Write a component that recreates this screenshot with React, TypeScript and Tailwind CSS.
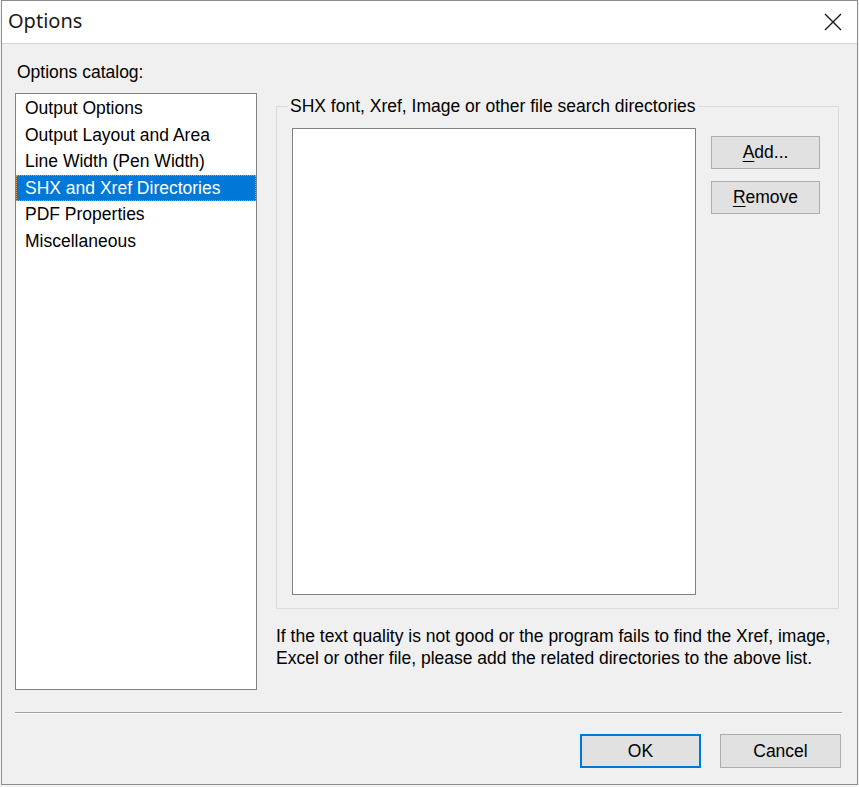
const catalog = [
  'Output Options',
  'Output Layout and Area',
  'Line Width (Pen Width)',
  'SHX and Xref Directories',
  'PDF Properties',
  'Miscellaneous',
];

function WinButton({ children, primary, className }: { children: React.ReactNode; primary?: boolean; className?: string }) {
  return (
    <button
      className={`flex items-center justify-center bg-[#e1e1e1] text-black ${
        primary ? 'border-2 border-[#0078d7]' : 'border border-[#adadad]'
      } ${className ?? ''}`}
    >
      {children}
    </button>
  );
}

export default function App() {
  return (
    <div className="w-[859px] h-[787px] bg-[#f4f4f4] overflow-hidden font-['Liberation_Sans',Arial,sans-serif] text-[17.5px] text-black">
      <div className="ml-[1px] w-[857px] h-[785px] border border-[#8c8c8c] bg-[#f0f0f0] flex flex-col">
        {/* title bar */}
        <div className="h-[43px] bg-white border-b border-[#d4d4d4] flex items-center justify-between shrink-0">
          <span className="ml-[6px] mb-[2px] font-['Noto_Sans','Open_Sans',sans-serif] text-[20px] text-[#1a1a1a]">Options</span>
          <svg width="18" height="18" viewBox="0 0 18 18" className="mr-[15px] mb-[1px]">
            <path d="M1 1 L17 17 M17 1 L1 17" stroke="#1a1a1a" strokeWidth="1.4" />
          </svg>
        </div>

        {/* body */}
        <div className="flex gap-[19px] pl-[13px] mt-[18px]">
          <div className="w-[242px] flex flex-col">
            <div className="h-[20px] leading-[20px] pl-[2px]">Options catalog:</div>
            <div className="mt-[11px] h-[597px] bg-white border border-[#828282] pt-[1px]">
              {catalog.map((item, i) => (
                <div
                  key={item}
                  className={`h-[26.6px] leading-[26.6px] pl-[9px] whitespace-nowrap ${
                    i === 3 ? 'bg-[#0078d7] text-white outline-1 outline-dotted outline-[#d99c55] -outline-offset-1' : ''
                  }`}
                >
                  {item}
                </div>
              ))}
            </div>
          </div>

          <div className="flex flex-col mt-[34px]">
            <fieldset className="w-[563px] border border-[#dcdcdc] pb-[13px] pt-[12px]">
              <legend className="ml-[11px] px-[2px] leading-[20px] h-[20px]">
                SHX font, Xref, Image or other file search directories
              </legend>
              <div className="flex pl-[15px]">
                <div className="w-[404px] h-[467px] bg-white border border-[#828282]" />
                <div className="ml-[15px] mt-[8px] flex flex-col gap-[12px]">
                  <WinButton className="w-[109px] h-[33px]">
                    <span>
                      <span className="underline underline-offset-[3px]">A</span>dd...
                    </span>
                  </WinButton>
                  <WinButton className="w-[109px] h-[33px]">
                    <span>
                      <span className="underline underline-offset-[3px]">R</span>emove
                    </span>
                  </WinButton>
                </div>
              </div>
            </fieldset>
            <p className="mt-[16px] leading-[22px]">
              If the text quality is not good or the program fails to find the Xref, image,
              <br />
              Excel or other file, please add the related directories to the above list.
            </p>
          </div>
        </div>

        <div className="mt-[22px] ml-[13px] w-[827px] h-[1px] bg-[#a0a0a0] shadow-[0_1px_0_#ffffff]" />

        <div className="mt-[21px] flex justify-end gap-[19px] pr-[16px]">
          <WinButton primary className="w-[121px] h-[34px]">
            OK
          </WinButton>
          <WinButton className="w-[121px] h-[34px]">Cancel</WinButton>
        </div>
      </div>
    </div>
  );
}
